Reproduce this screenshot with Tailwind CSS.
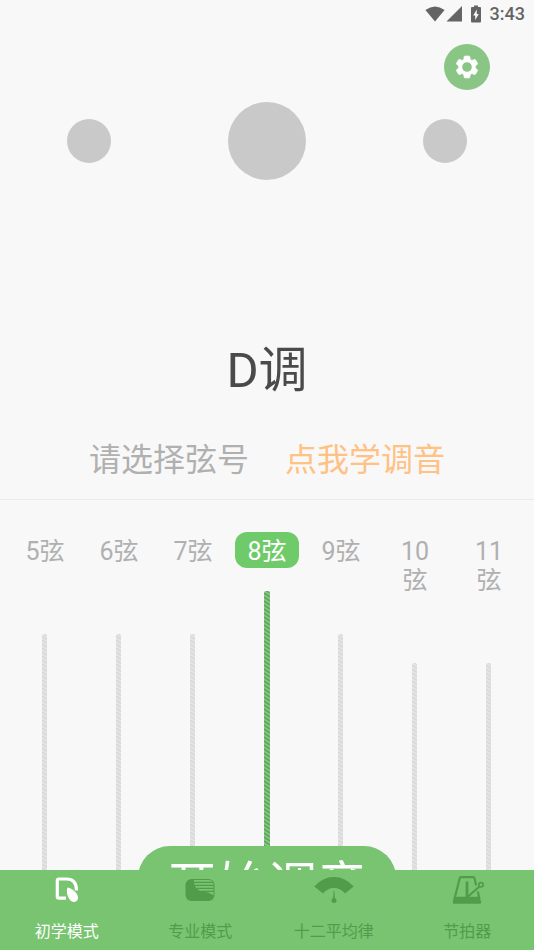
<!DOCTYPE html>
<html lang="zh-CN">
<head>
<meta charset="utf-8">
<meta name="viewport" content="width=device-width, initial-scale=1">
<title>调音器</title>
<script src="https://cdn.jsdelivr.net/npm/@tailwindcss/browser@4"></script>
</head>
<body class="flex h-screen flex-col overflow-hidden bg-[#f8f8f8] font-[Roboto,'Noto_Sans_CJK_SC',sans-serif] text-[#b0b0b0]">
  <header>
    <div class="flex h-7 items-center justify-end pr-[9px] text-[#646464]">
      <svg class="mr-px h-4 w-5" viewBox="0 0 20 16" fill="currentColor" aria-hidden="true"><path d="M.4 4Q10-3.200 19.600 4L10 15.500Z"/></svg>
      <svg class="h-4 w-4" viewBox="0 0 16 16" fill="currentColor" aria-hidden="true"><path d="M16 0V15.500H.5Z"/></svg>
      <svg class="ml-2 h-[18px] w-3" viewBox="0 0 12 18" fill="currentColor" aria-hidden="true"><path fill-rule="evenodd" d="M4 .5h4V2h2q1 0 1 1v13.500q0 1-1 1H2q-1 0-1-1V3q0-1 1-1h2ZM6.800 4.500 3.200 10.500h2v4.500L8.800 9h-2Z"/></svg>
      <span class="ml-2 text-lg leading-7 font-medium">3:43</span>
    </div>
    <div class="flex justify-end pt-4 pr-11">
      <button type="button" aria-label="设置" class="flex size-[46px] items-center justify-center rounded-full bg-[#89c585] text-white">
        <svg class="size-[26px]" viewBox="0 0 24 24" fill="currentColor" aria-hidden="true"><path stroke="currentColor" stroke-width=".9" stroke-linejoin="round" d="M19.430 12.980c.04-.32.070-.64.070-.98s-.03-.66-.07-.98l2.110-1.650c.19-.15.240-.42.120-.64l-2-3.460c-.12-.22-.39-.3-.61-.22l-2.490 1c-.52-.4-1.080-.73-1.690-.98l-.38-2.650C14.460 2.180 14.250 2 14 2h-4c-.25 0-.46.180-.49.420l-.38 2.650c-.61.250-1.170.590-1.690.980l-2.490-1c-.23-.09-.49 0-.61.220l-2 3.460c-.13.220-.07.490.120.640l2.110 1.650c-.04.320-.07.650-.07.980s.03.660.070.980l-2.110 1.650c-.19.150-.24.420-.12.640l2 3.460c.12.220.390.300.610.220l2.490-1c.52.400 1.080.730 1.690.980l.38 2.650c.03.240.240.420.490.420h4c.25 0 .46-.18.490-.42l.38-2.650c.61-.25 1.170-.59 1.690-.98l2.490 1c.23.090.490 0 .61-.22l2-3.460c.12-.22.070-.49-.12-.64l-2.110-1.650zM12 16.900a4.900 4.900 0 1 1 0-9.800 4.900 4.900 0 0 1 0 9.800z"/></svg>
      </button>
    </div>
  </header>

  <main class="relative flex min-h-0 flex-1 flex-col overflow-hidden">
    <div class="mt-3 grid grid-cols-3 items-center justify-items-center">
      <span class="size-11 rounded-full bg-[#c9c9c9]"></span>
      <span class="size-[78px] rounded-full bg-[#c9c9c9]"></span>
      <span class="size-11 rounded-full bg-[#c9c9c9]"></span>
    </div>

    <h1 class="mt-40 text-center text-[49px] leading-[62px] text-[#4a4a4a]">D调</h1>
    <div class="mt-9 flex items-center justify-center gap-9 text-[32px] leading-[45px] whitespace-nowrap">
      <p>请选择弦号</p>
      <a href="#learn" class="text-[#ffc184]">点我学调音</a>
    </div>

    <div class="mt-4 flex min-h-0 flex-1 border-t border-[#ebebeb] px-2 pt-8 text-[25px] leading-[29px]">
      <div class="flex flex-1 flex-col items-center"><button type="button" class="w-16 shrink-0 px-2 pt-[5px] pb-0.5">5弦</button><svg class="mt-[66px] min-h-0 w-1.5 flex-1" aria-hidden="true"><rect width="5" height="120%" rx="2" fill="url(#idle)"/></svg></div>
      <div class="flex flex-1 flex-col items-center"><button type="button" class="w-16 shrink-0 px-2 pt-[5px] pb-0.5">6弦</button><svg class="mt-[66px] min-h-0 w-1.5 flex-1" aria-hidden="true"><rect width="5" height="120%" rx="2" fill="url(#idle)"/></svg></div>
      <div class="flex flex-1 flex-col items-center"><button type="button" class="w-16 shrink-0 px-2 pt-[5px] pb-0.5">7弦</button><svg class="mt-[66px] min-h-0 w-1.5 flex-1" aria-hidden="true"><rect width="5" height="120%" rx="2" fill="url(#idle)"/></svg></div>
      <div class="flex flex-1 flex-col items-center"><button type="button" aria-pressed="true" class="w-16 shrink-0 rounded-xl bg-[#6fca69] px-2 pt-[5px] pb-0.5 text-white">8弦</button><svg class="mt-[23px] min-h-0 w-1.5 flex-1" aria-hidden="true"><rect width="6" height="120%" rx="2" fill="url(#active)"/></svg></div>
      <div class="flex flex-1 flex-col items-center"><button type="button" class="w-16 shrink-0 px-2 pt-[5px] pb-0.5">9弦</button><svg class="mt-[66px] min-h-0 w-1.5 flex-1" aria-hidden="true"><rect width="5" height="120%" rx="2" fill="url(#idle)"/></svg></div>
      <div class="flex flex-1 flex-col items-center"><button type="button" class="w-16 shrink-0 px-2 pt-[5px] pb-0.5">10弦</button><svg class="mt-[66px] min-h-0 w-1.5 flex-1" aria-hidden="true"><rect width="5" height="120%" rx="2" fill="url(#idle)"/></svg></div>
      <div class="flex flex-1 flex-col items-center"><button type="button" class="w-16 shrink-0 px-2 pt-[5px] pb-0.5">11弦</button><svg class="mt-[66px] min-h-0 w-1.5 flex-1" aria-hidden="true"><rect width="5" height="120%" rx="2" fill="url(#idle)"/></svg></div>
    </div>

    <button type="button" class="absolute -bottom-14 left-1/2 h-20 -translate-x-1/2 rounded-[32px] bg-[#78c471] px-[29px] text-[50px] leading-[80px] whitespace-nowrap text-white">开始调音</button>
  </main>

  <nav class="grid h-20 shrink-0 grid-cols-4 bg-[#78c471] text-base leading-6 text-[#509c4a]">
    <a href="#beginner" aria-current="page" class="flex flex-col items-center pt-1 text-white">
      <svg class="h-8 w-10" viewBox="0 0 40 32" aria-hidden="true"><path d="M19 24.200H12Q10.300 24.200 10.300 22.500V6.700Q10.300 5 12 5H19.500C26 5 29.500 9 29.500 16.500" fill="none" stroke="currentColor" stroke-width="3.200"/><path d="M20.500 13.500C26 14.500 31.500 20 31 24.500C30.500 28.500 25.500 29 23 26C20.500 23 19 18 20.500 13.500Z" fill="currentColor"/></svg>
      <span class="mt-3.5">初学模式</span>
    </a>
    <a href="#pro" class="flex flex-col items-center pt-1">
      <svg class="h-8 w-10" viewBox="0 0 40 32" aria-hidden="true"><rect x="5.500" y="5" width="29" height="22" rx="6" fill="currentColor"/><path d="M14 6H28.500Q33.500 6 33.500 11V21.500C30.500 19 27 18.200 23 17.500C17 16.500 13.500 12 14 6Z" fill="#78c471"/><path d="M14 8.300H33.500M14.500 11.300H34M16.500 14.300H34M21 17.300H34" stroke="currentColor" stroke-width="1.300"/></svg>
      <span class="mt-3.5">专业模式</span>
    </a>
    <a href="#temperament" class="flex flex-col items-center pt-1">
      <svg class="h-8 w-10" viewBox="0 0 40 32" fill="currentColor" aria-hidden="true"><path d="M.3 12.500Q8.500 3 20 3T39.700 12.500L31 19.500Q26.500 14 20 14T9 19.500Z"/><path d="M19.700 16.500h.6L21 25h-2Z"/><circle cx="20" cy="26.400" r="2.500"/></svg>
      <span class="mt-3.5">十二平均律</span>
    </a>
    <a href="#metronome" class="flex flex-col items-center pt-1">
      <svg class="h-8 w-10" viewBox="0 0 40 32" fill="none" stroke="currentColor" aria-hidden="true"><path d="M7.500 25 12.700 4.300Q13 3.200 14 3.200H26.200Q27.200 3.200 27.500 4.300L29.200 11.500M30.800 17.500 32.500 25" stroke-width="2.200"/><path d="M7 22.800H32.500L34 27.500Q34.500 29.800 32.300 29.800H7.700Q5.300 29.800 5.800 27.500Z" fill="currentColor" stroke="none"/><path d="M20 7.500V23" stroke-width="2.800"/><path d="M20.500 23 32.500 12.500" stroke-width="2.200"/><circle cx="34" cy="10.800" r="2.200" stroke-width="1.700"/></svg>
      <span class="mt-3.5">节拍器</span>
    </a>
  </nav>

  <svg class="absolute size-0" aria-hidden="true">
    <defs>
      <pattern id="idle" width="6" height="4" patternUnits="userSpaceOnUse"><path d="M0 0H6V4H0Z" fill="#e4e4e4"/><path d="M0-2 6 2M0 2 6 6" stroke="#d8d8d8" stroke-width="1.500"/></pattern>
      <pattern id="active" width="6" height="4" patternUnits="userSpaceOnUse"><path d="M0 0H6V4H0Z" fill="#8ac987"/><path d="M0-2 6 2M0 2 6 6" stroke="#5da85b" stroke-width="1.800"/></pattern>
    </defs>
  </svg>
</body>
</html>
